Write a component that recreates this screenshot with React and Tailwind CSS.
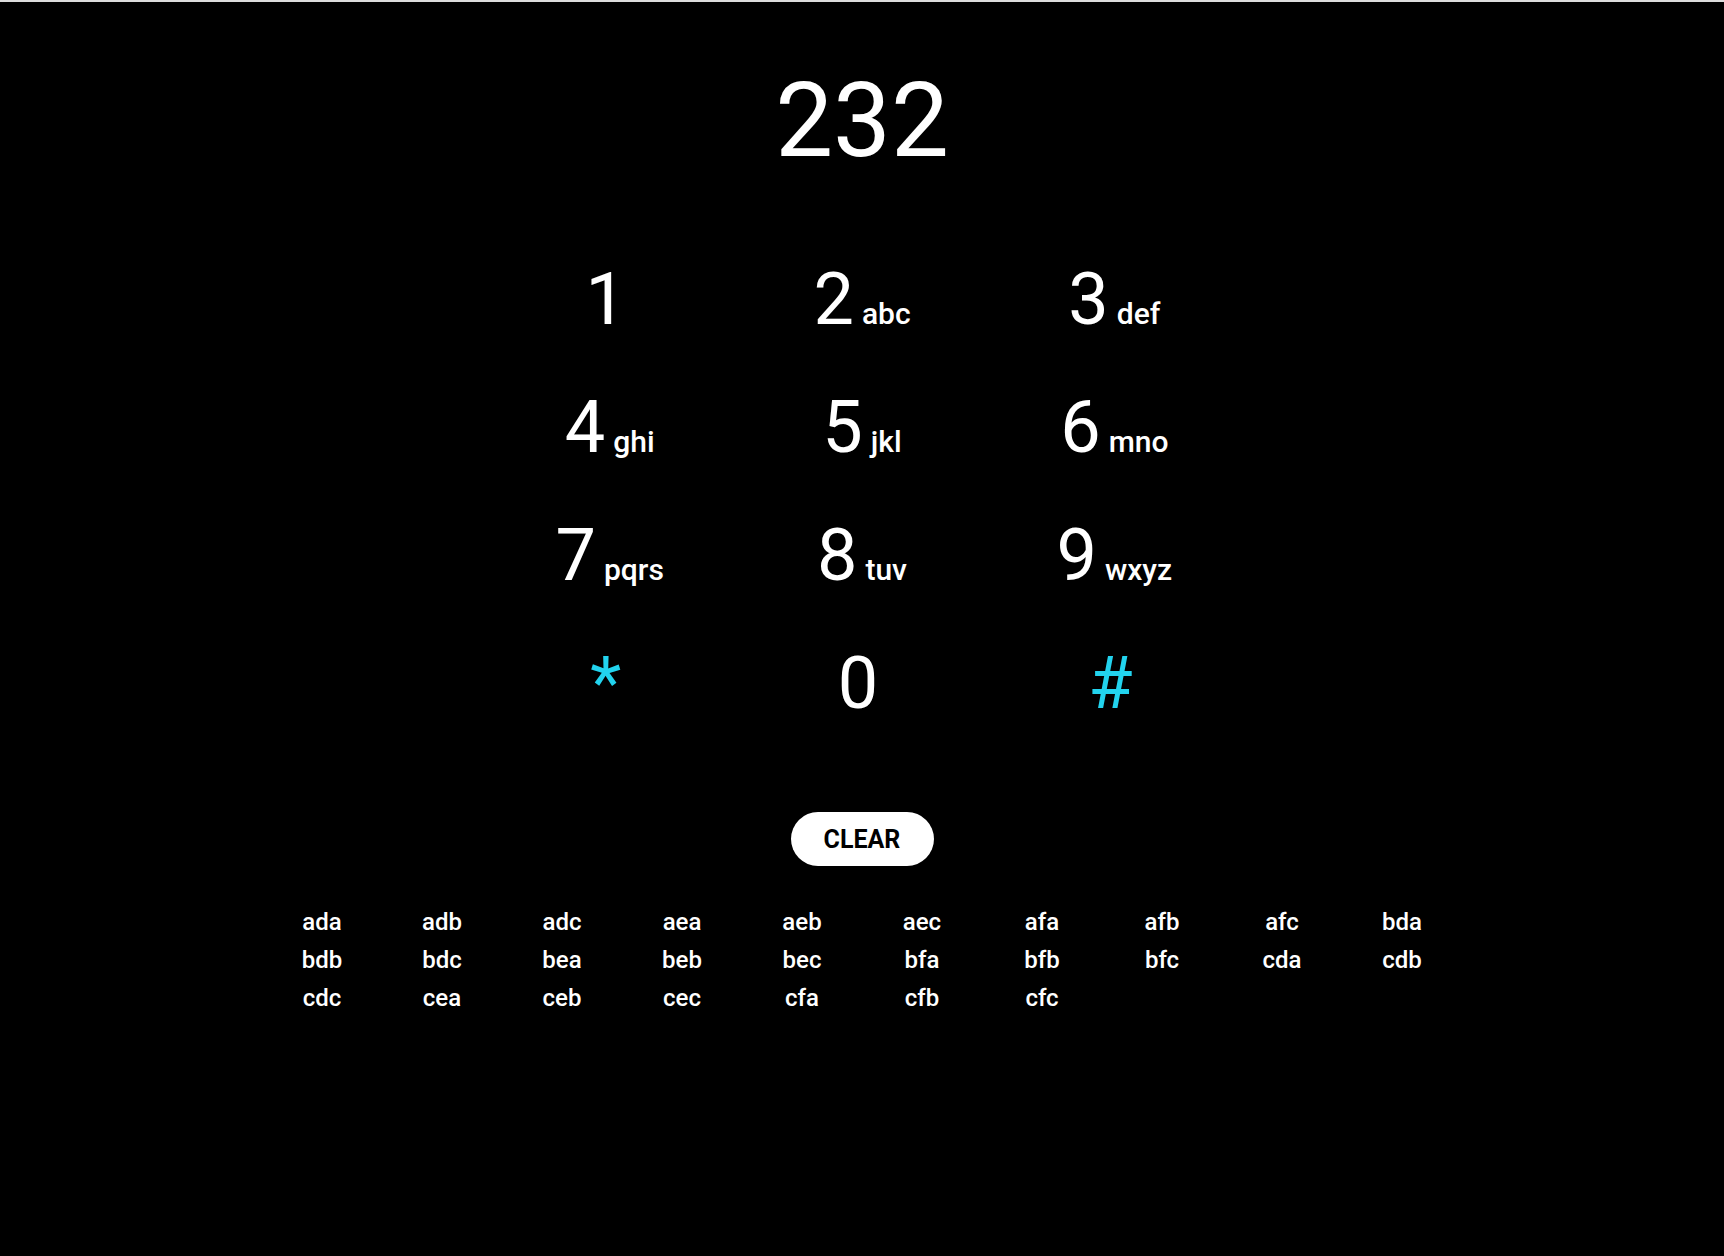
import React, { useState } from "react";

const keys = [
  { digit: "1", letters: "" },
  { digit: "2", letters: "abc" },
  { digit: "3", letters: "def" },
  { digit: "4", letters: "ghi" },
  { digit: "5", letters: "jkl" },
  { digit: "6", letters: "mno" },
  { digit: "7", letters: "pqrs" },
  { digit: "8", letters: "tuv" },
  { digit: "9", letters: "wxyz" },
  { digit: "*", letters: "", accent: true },
  { digit: "0", letters: "" },
  { digit: "#", letters: "", accent: true },
];

const combos = [
  "ada", "adb", "adc", "aea", "aeb", "aec", "afa", "afb", "afc", "bda",
  "bdb", "bdc", "bea", "beb", "bec", "bfa", "bfb", "bfc", "cda", "cdb",
  "cdc", "cea", "ceb", "cec", "cfa", "cfb", "cfc",
];

export default function App() {
  const [number, setNumber] = useState("232");

  return (
    <div className="min-h-screen bg-black border-t-2 border-[#dcdcdc] text-white font-['Roboto',sans-serif] flex flex-col items-center">
      {/* Display */}
      <div className="pt-[67px] text-[103px] leading-none h-[171px]">{number}</div>

      {/* Keypad */}
      <div className="mt-[63px] grid grid-cols-3 w-[757px]">
        {keys.map((k) => (
          <button
            key={k.digit}
            onClick={() => setNumber(number + k.digit)}
            className={`h-[128px] leading-[128px] text-center text-[72px] whitespace-nowrap ${
              k.accent ? "text-[#22d3ee]" : "text-white"
            }`}
          >
            <span>{k.digit}</span>
            <span className="inline-block ml-[8px] text-[30px] font-medium leading-none">
              {k.letters}
            </span>
          </button>
        ))}
      </div>

      <button
        onClick={() => setNumber("")}
        className="mt-[64px] w-[143px] h-[54px] rounded-full bg-white text-black font-bold text-[25px] leading-none"
      >
        CLEAR
      </button>

      {/* Letter combinations */}
      <div className="mt-[37px] grid grid-cols-10 w-[1200px] text-center text-[24px] font-medium leading-[38px]">
        {combos.map((c) => (
          <span key={c}>{c}</span>
        ))}
      </div>
    </div>
  );
}
